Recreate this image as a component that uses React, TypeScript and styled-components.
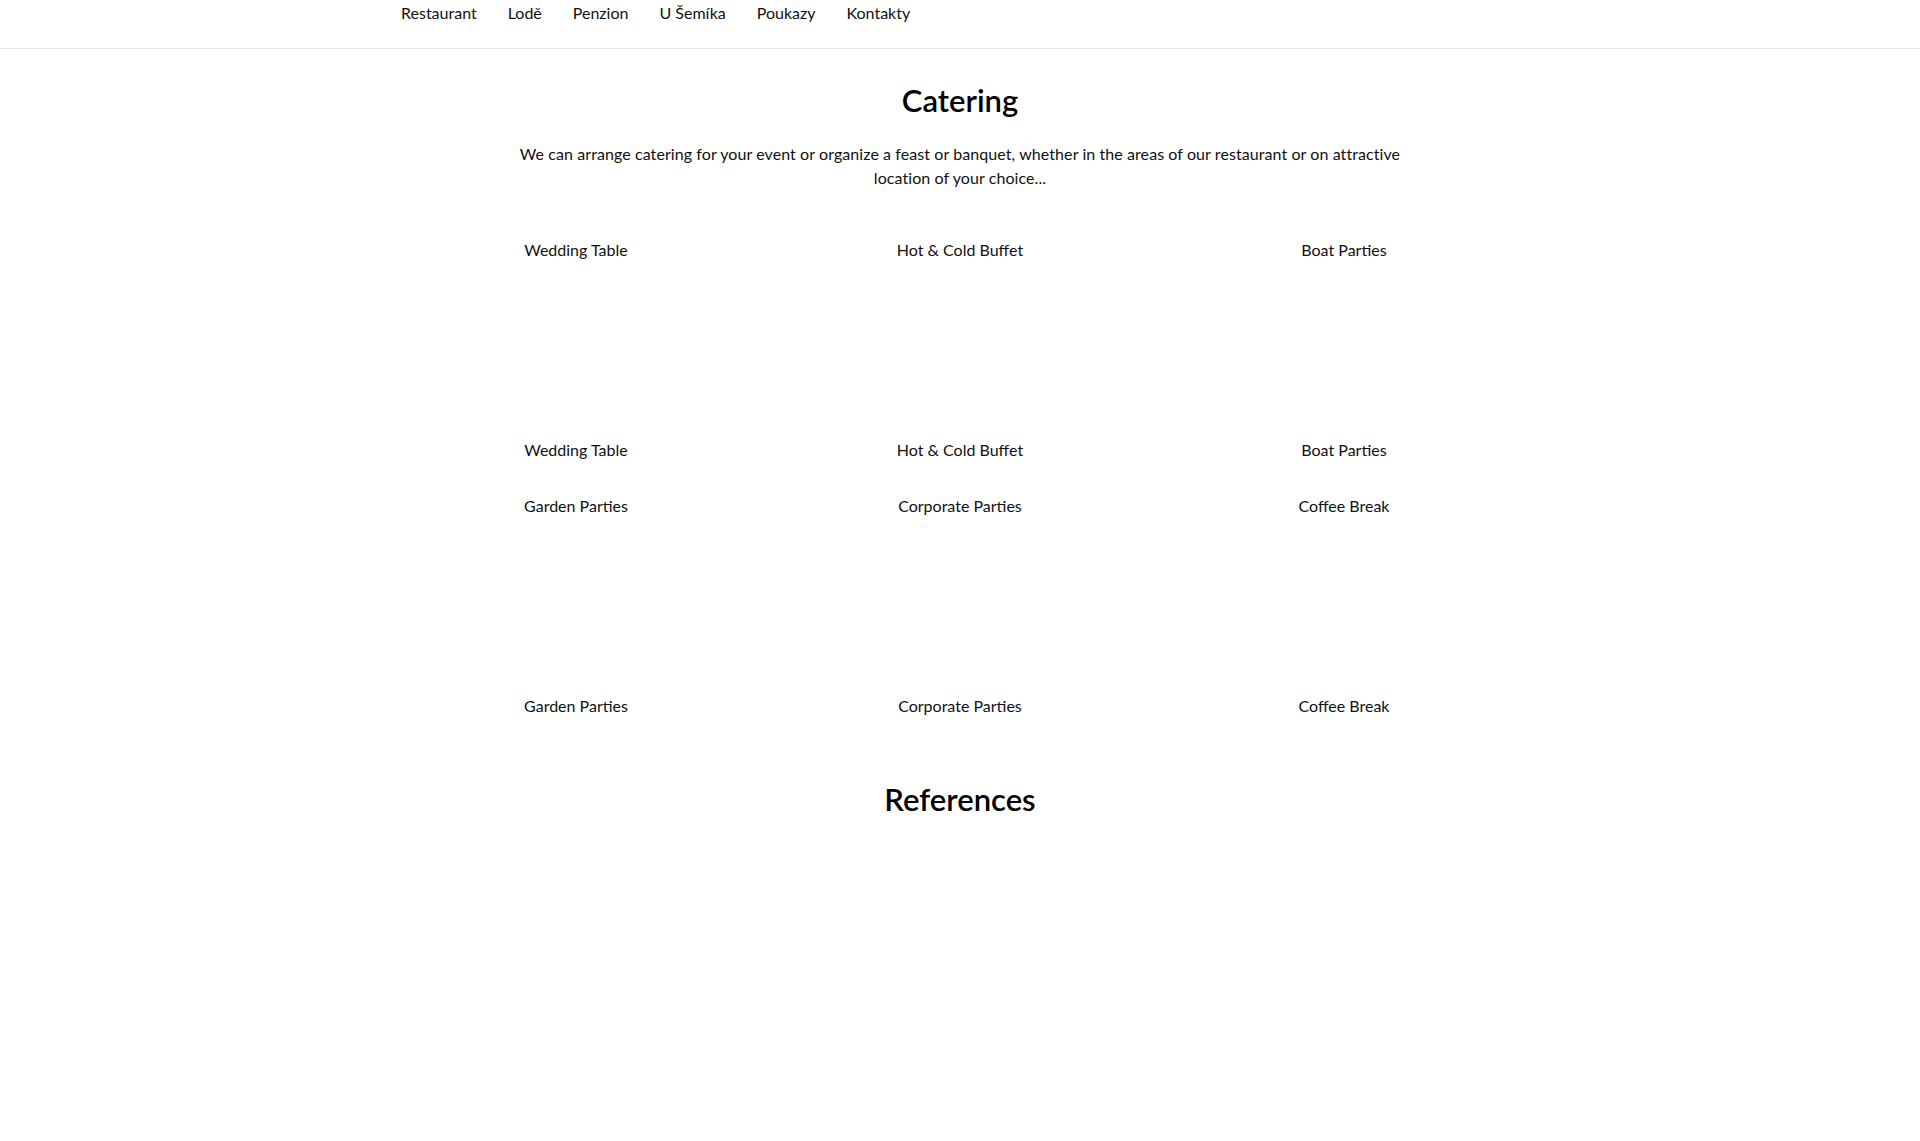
import React from "react";
import styled, { createGlobalStyle } from "styled-components";

const GlobalStyle = createGlobalStyle`
  html, body {
    margin: 0;
    padding: 0;
    background: #ffffff;
  }
  body {
    font-family: Lato, "Open Sans", "Noto Sans", sans-serif;
    color: #111111;
    font-size: 16px;
  }
  * { box-sizing: border-box; }
`;

const Header = styled.header`
  border-bottom: 1px solid #e6e6ea;
  height: 49px;
`;

const NavBar = styled.nav`
  width: 1140px;
  margin: 0 auto;
  padding: 1px 0 0 11px;
  display: flex;
  gap: 31px;
`;

const NavLink = styled.a`
  font-size: 16px;
  line-height: 24px;
  color: #111111;
  text-decoration: none;
`;

const Main = styled.main`
  display: flex;
  flex-direction: column;
  align-items: center;
  padding-top: 33px;
`;

const SectionTitle = styled.h2<{ $gapTop?: number }>`
  margin: ${(p) => p.$gapTop ?? 0}px 0 0;
  font-size: 31px;
  line-height: 36px;
  font-weight: 600;
  color: #000000;
  text-align: center;
`;

const Lead = styled.p`
  margin: 24px 0 0;
  max-width: 900px;
  font-size: 16px;
  line-height: 24px;
  letter-spacing: 0.08px;
  text-align: center;
`;

const Grid = styled.div`
  margin-top: 48px;
  width: 1152px;
  display: grid;
  grid-template-columns: repeat(3, 1fr);
  row-gap: 32px;
`;

const Card = styled.div`
  display: flex;
  flex-direction: column;
  align-items: center;
`;

const CardLabel = styled.span`
  font-size: 16px;
  line-height: 24px;
  text-align: center;
`;

const CardImage = styled.div`
  height: 176px;
  width: 100%;
`;

const navItems = ["Restaurant", "Lodě", "Penzion", "U Šemíka", "Poukazy", "Kontakty"];
const services = [
  "Wedding Table",
  "Hot & Cold Buffet",
  "Boat Parties",
  "Garden Parties",
  "Corporate Parties",
  "Coffee Break",
];

export default function App() {
  return (
    <>
      <GlobalStyle />
      <Header>
        <NavBar>
          {navItems.map((n) => (
            <NavLink key={n} href="#">
              {n}
            </NavLink>
          ))}
        </NavBar>
      </Header>
      <Main>
        <SectionTitle>Catering</SectionTitle>
        <Lead>
          We can arrange catering for your event or organize a feast or banquet, whether in the areas of our
          restaurant or on attractive location of your choice...
        </Lead>
        <Grid>
          {services.map((s) => (
            <Card key={s}>
              <CardLabel>{s}</CardLabel>
              <CardImage aria-label={s} />
              <CardLabel>{s}</CardLabel>
            </Card>
          ))}
        </Grid>
        <SectionTitle $gapTop={63}>References</SectionTitle>
      </Main>
    </>
  );
}
